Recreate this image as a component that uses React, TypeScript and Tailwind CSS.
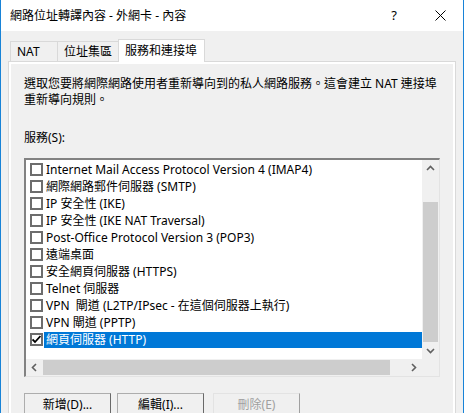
import { ReactNode } from 'react';

const services = [
  'Internet Mail Access Protocol Version 4 (IMAP4)',
  '網際網路郵件伺服器 (SMTP)',
  'IP 安全性 (IKE)',
  'IP 安全性 (IKE NAT Traversal)',
  'Post-Office Protocol Version 3 (POP3)',
  '遠端桌面',
  '安全網頁伺服器 (HTTPS)',
  'Telnet 伺服器',
  'VPN  閘道 (L2TP/IPsec - 在這個伺服器上執行)',
  'VPN 閘道 (PPTP)',
  '網頁伺服器 (HTTP)',
];

const Chevron = ({ dir }: { dir: 'up' | 'down' | 'left' | 'right' }) => {
  const points = {
    up: '1,6 4.5,2.5 8,6',
    down: '1,3 4.5,6.5 8,3',
    left: '6,1 2.5,4.5 6,8',
    right: '3,1 6.5,4.5 3,8',
  }[dir];
  return (
    <svg width="9" height="9" viewBox="0 0 9 9">
      <polyline points={points} fill="none" stroke="#606060" strokeWidth="1.6" />
    </svg>
  );
};

const Checkbox = ({ checked }: { checked?: boolean }) => (
  <div className="flex h-[13px] w-[13px] shrink-0 items-center justify-center border-2 border-[#6d6d6d] bg-white">
    {checked && (
      <svg width="9" height="9" viewBox="0 0 9 9">
        <polyline points="0.5,4.5 3,7 8.5,1" fill="none" stroke="#000" strokeWidth="1.8" />
      </svg>
    )}
  </div>
);

const Tab = ({ children, active, className }: { children: ReactNode; active?: boolean; className?: string }) => (
  <div
    className={
      active
        ? `relative z-10 -mb-[1px] -ml-[1px] flex h-[23px] items-center border border-b-0 border-[#d9d9d9] bg-white pl-[6px] ${className}`
        : `flex h-[20px] items-center border border-b-0 border-[#d9d9d9] bg-[#f0f0f0] pl-[6px] ${className}`
    }
  >
    {children}
  </div>
);

const Button = ({ children, disabled }: { children: ReactNode; disabled?: boolean }) => (
  <div
    className={
      disabled
        ? 'flex h-[23px] w-[87px] items-center justify-center border border-t-[#e3e3e3] border-l-[#e3e3e3] border-r-[#a0a0a0] border-b-[#a0a0a0] bg-[#f0f0f0] text-[#a0a0a0]'
        : 'flex h-[23px] w-[87px] items-center justify-center border border-t-[#adadad] border-l-[#adadad] border-r-[#696969] border-b-[#696969] bg-[#f0f0f0]'
    }
  >
    {children}
  </div>
);

export default function App() {
  return (
    <div className="h-[413px] w-[465px] overflow-hidden bg-white font-['Noto_Sans','Noto_Sans_CJK_TC',sans-serif] text-[12px] text-black">
      <div className="flex h-full w-[464px] flex-col border-x border-[#1883d7]">
        <div className="flex h-[31px] shrink-0 items-center bg-white">
          <span className="flex-1 pl-[9px]">網路位址轉譯內容 - 外網卡 - 內容</span>
          <span className="w-[46px] text-center text-[13px]">?</span>
          <span className="flex w-[46px] justify-center">
            <svg width="11" height="11" viewBox="0 0 11 11">
              <path d="M0.5 0.5 L10.5 10.5 M10.5 0.5 L0.5 10.5" stroke="#000" strokeWidth="1" />
            </svg>
          </span>
        </div>

        <div className="flex flex-1 flex-col bg-[#f0f0f0] px-[7px] pt-[8px]">
          <div className="flex h-[22px] items-end pl-[2px]">
            <Tab className="w-[48px]">NAT</Tab>
            <Tab className="w-[61px] border-l-0">位址集區</Tab>
            <Tab active className="w-[87px]">
              服務和連接埠
            </Tab>
          </div>

          <div className="flex-1 border border-[#d9d9d9] bg-white p-[2px]">
            <div className="h-full bg-[#f0f0f0] px-[13px] pt-[12px]">
              <p className="leading-[16px]">
                選取您要將網際網路使用者重新導向到的私人網路服務。這會建立 NAT 連接埠
                <br />
                重新導向規則。
              </p>
              <p className="mt-[22px] leading-[16px]">服務(S):</p>

              <div className="mt-[12px] flex h-[219px] w-[416px] flex-col border-t-2 border-l-2 border-r border-b border-t-[#828282] border-l-[#828282] border-r-[#e3e3e3] border-b-[#e3e3e3] bg-white">
                <div className="flex flex-1">
                  <div className="flex-1 pt-[1px]">
                    {services.map((s, i) => {
                      const selected = i === services.length - 1;
                      return (
                        <div key={s} className="flex h-[17px] items-center whitespace-pre">
                          <div className="ml-[4px]">
                            <Checkbox checked={selected} />
                          </div>
                          <div
                            className={
                              selected
                                ? 'ml-[1px] flex h-[16px] flex-1 items-center bg-[#0078d7] pl-[2px] text-white'
                                : 'ml-[1px] pl-[2px]'
                            }
                          >
                            {s}
                          </div>
                        </div>
                      );
                    })}
                  </div>
                  <div className="flex w-[17px] flex-col bg-[#f0f0f0]">
                    <div className="flex h-[17px] items-center justify-center">
                      <Chevron dir="up" />
                    </div>
                    <div className="flex-1">
                      <div className="mx-[1px] mt-[25px] h-[140px] bg-[#cdcdcd]" />
                    </div>
                    <div className="flex h-[17px] items-center justify-center">
                      <Chevron dir="down" />
                    </div>
                  </div>
                </div>
                <div className="flex h-[17px]">
                  <div className="flex flex-1 bg-[#f0f0f0]">
                    <div className="flex w-[17px] items-center justify-center">
                      <Chevron dir="left" />
                    </div>
                    <div className="my-[1px] w-[347px] bg-[#cdcdcd]" />
                    <div className="flex-1" />
                    <div className="flex w-[17px] items-center justify-center">
                      <Chevron dir="right" />
                    </div>
                  </div>
                  <div className="w-[17px] bg-[#f0f0f0]" />
                </div>
              </div>

              <div className="mt-[16px] flex gap-[6px]">
                <Button>新增(D)...</Button>
                <Button>編輯(I)...</Button>
                <div className="ml-[3px]">
                  <Button disabled>刪除(E)</Button>
                </div>
              </div>
            </div>
          </div>
        </div>
      </div>
    </div>
  );
}
